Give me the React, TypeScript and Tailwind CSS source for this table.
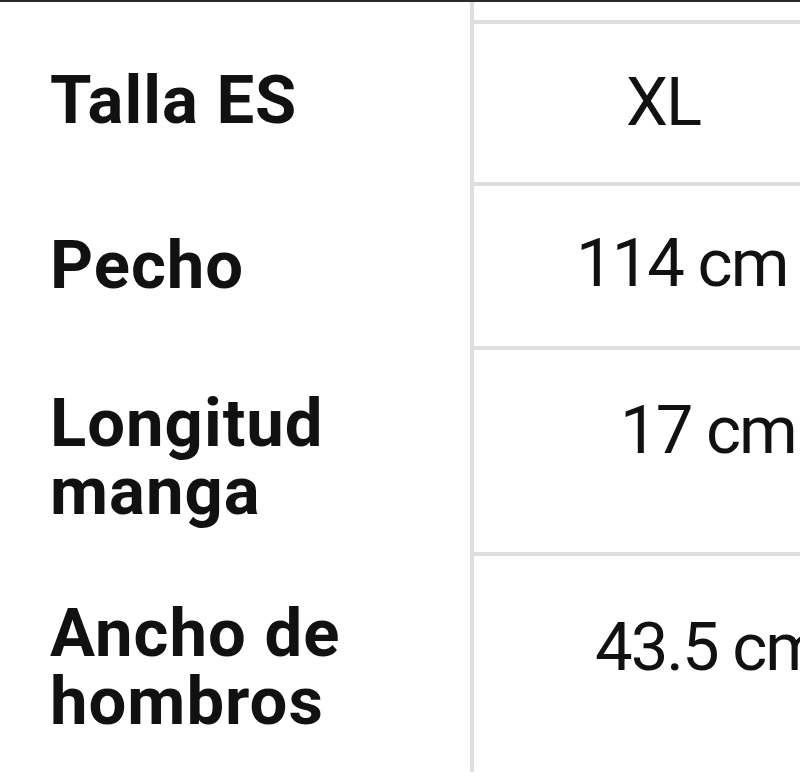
import React from "react";

type Row = {
  label: string[];
  value: string;
  h: string;
  lpt: string;
  vpt: string;
  vpl: string;
  border: boolean;
};

const rows: Row[] = [
  { label: ["Talla ES"], value: "XL", h: "h-[162px]", lpt: "pt-[42px]", vpt: "pt-[44px]", vpl: "pl-[152px]", border: true },
  { label: ["Pecho"], value: "114 cm", h: "h-[164px]", lpt: "pt-[45px]", vpt: "pt-[43px]", vpl: "pl-[102px]", border: true },
  { label: ["Longitud", "manga"], value: "17 cm", h: "h-[206px]", lpt: "pt-[39px]", vpt: "pt-[46px]", vpl: "pl-[146px]", border: true },
  { label: ["Ancho de", "hombros"], value: "43.5 cm", h: "h-[216px]", lpt: "pt-[43px]", vpt: "pt-[57px]", vpl: "pl-[121px]", border: false },
];

export default function App() {
  return (
    <div
      className="w-[800px] h-[776px] overflow-hidden bg-white text-[#111]"
      style={{ fontFamily: "Roboto, 'Liberation Sans', sans-serif" }}
    >
      <div className="h-[2px] bg-[#2a2a2a]" />
      <div className="flex">
        <div className="w-[470px] shrink-0" />
        <div className="flex-1 h-[22px] border-l-4 border-b-4 border-[#dedede]" />
      </div>
      {rows.map((r, i) => (
        <div key={i} className={`flex ${r.h}`}>
          <div className={`w-[470px] shrink-0 pl-[50px] ${r.lpt}`}>
            <p className="font-bold text-[67px] leading-[68px] tracking-[1px]">
              {r.label.map((l, j) => (
                <React.Fragment key={j}>
                  {j > 0 && <br />}
                  {l}
                </React.Fragment>
              ))}
            </p>
          </div>
          <div
            className={`flex-1 border-l-4 border-[#dedede] ${r.border ? "border-b-4" : ""} ${r.vpt} ${r.vpl} whitespace-nowrap overflow-hidden text-[67px] leading-[68px] tracking-[-2px]`}
          >
            {r.value}
          </div>
        </div>
      ))}
    </div>
  );
}
